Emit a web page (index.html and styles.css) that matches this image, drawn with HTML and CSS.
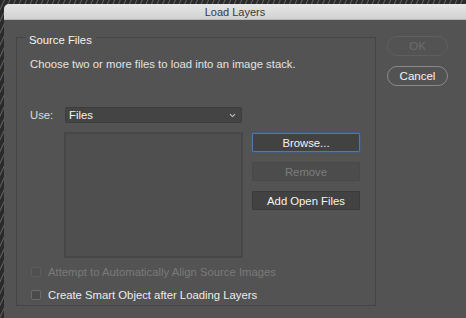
FILE: index.html
```html
<!DOCTYPE html>
<html lang="en">
<head>
    <meta charset="UTF-8">
    <title>Load Layers</title>
    <link rel="stylesheet" href="styles.css">
</head>
<body>
    <div class="window">
        <div class="titlebar">Load Layers</div>
        <div class="dialog">
            <fieldset class="group">
                <legend>Source Files</legend>
                <p class="hint">Choose two or more files to load into an image stack.</p>

                <div class="use-row">
                    <span class="use-label">Use:</span>
                    <div class="select">
                        <span>Files</span>
                        <svg width="7" height="5" viewBox="0 0 7 5"><path d="M1 1.2 L3.5 3.6 L6 1.2" fill="none" stroke="#c8c8c8" stroke-width="1.1"/></svg>
                    </div>
                </div>

                <div class="files-row">
                    <div class="file-list"></div>
                    <div class="file-actions">
                        <button class="btn focused">Browse...</button>
                        <button class="btn" disabled>Remove</button>
                        <button class="btn">Add Open Files</button>
                    </div>
                </div>

                <label class="check disabled"><span class="box"></span>Attempt to Automatically Align Source Images</label>
                <label class="check"><span class="box"></span>Create Smart Object after Loading Layers</label>
            </fieldset>

            <div class="actions">
                <button class="pill" disabled>OK</button>
                <button class="pill">Cancel</button>
            </div>
        </div>
    </div>
</body>
</html>
```

FILE: styles.css
```css
* { margin: 0; padding: 0; box-sizing: border-box; }
body {
    width: 466px;
    height: 318px;
    overflow: hidden;
    font-family: "Liberation Sans", Arial, sans-serif;
    font-size: 11.3px;
    background: #2c2a27;
    background-image: repeating-linear-gradient(115deg, #2c2a27 0, #2c2a27 3px, #5a6470 4px, #2c2a27 5px);
}
.window {
    margin: 4px 0 0 4px;
    height: 314px;
    background: #535353;
    border-radius: 5px 0 0 0;
    overflow: hidden;
}
.titlebar {
    height: 16px;
    line-height: 16px;
    text-align: center;
    color: #3a3a3a;
    font-size: 11px;
    background: linear-gradient(#e6e6e6, #d2d2d2);
    border-bottom: 1px solid #b8b8b8;
}
.dialog {
    display: flex;
    align-items: flex-start;
    padding: 6px 0 0 12px;
}
.group {
    width: 360px;
    border: 1px solid #464646;
    padding: 0 0 3px 13px;
    color: #e2e2e2;
}
.group legend {
    margin-left: -5px;
    padding: 7px 4px 1px;
    line-height: 14px;
    color: #f4f4f4;
}
.hint {
    margin-top: 9px;
    line-height: 14px;
}
.use-row {
    display: flex;
    align-items: center;
    margin-top: 36px;
    height: 16px;
}
.use-label { width: 35px; color: #dcdcdc; }
.select {
    width: 177px;
    height: 16px;
    display: flex;
    align-items: center;
    justify-content: space-between;
    padding: 0 5px 0 3px;
    background: #444;
    border: 1px solid #3d3d3d;
    border-radius: 2px;
    color: #f4f4f4;
}
.files-row {
    display: flex;
    margin-top: 9px;
}
.file-list {
    margin-left: 34px;
    width: 179px;
    height: 126px;
    background: #4f4f4f;
    border: 2px solid #474747;
}
.file-actions {
    display: flex;
    flex-direction: column;
    gap: 10px;
    margin: 1px 0 0 9px;
}
.btn {
    width: 108px;
    height: 19px;
    font: inherit;
    color: #f4f4f4;
    background: #424242;
    border: 1px solid #3a3a3a;
    border-radius: 1px;
}
.btn.focused { border: 1px solid #5378ae; box-shadow: 0 0 0 1px #3f5a80; }
.btn:disabled { background: #4c4c4c; border-color: #484848; color: #7d7d7d; }
.check {
    display: flex;
    align-items: center;
    gap: 7px;
    line-height: 14px;
    margin-top: 7px;
    margin-left: 1px;
    color: #ececec;
}
.check + .check { margin-top: 9px; }
.check .box {
    width: 10px;
    height: 10px;
    border: 1px solid #6a6a6a;
    background: #4a4a4a;
    border-radius: 2px;
}
.check.disabled { color: #7a7a7a; }
.check.disabled .box { border-color: #5e5e5e; background: #4f4f4f; }
.actions {
    display: flex;
    flex-direction: column;
    gap: 10px;
    margin: 10px 0 0 11px;
}
.pill {
    width: 61px;
    height: 20px;
    font: inherit;
    font-size: 11.5px;
    color: #f4f4f4;
    background: #535353;
    border: 1px solid #8a8a8a;
    border-radius: 10px;
}
.pill:disabled { color: #6e6e6e; border-color: #5f5f5f; }
```
